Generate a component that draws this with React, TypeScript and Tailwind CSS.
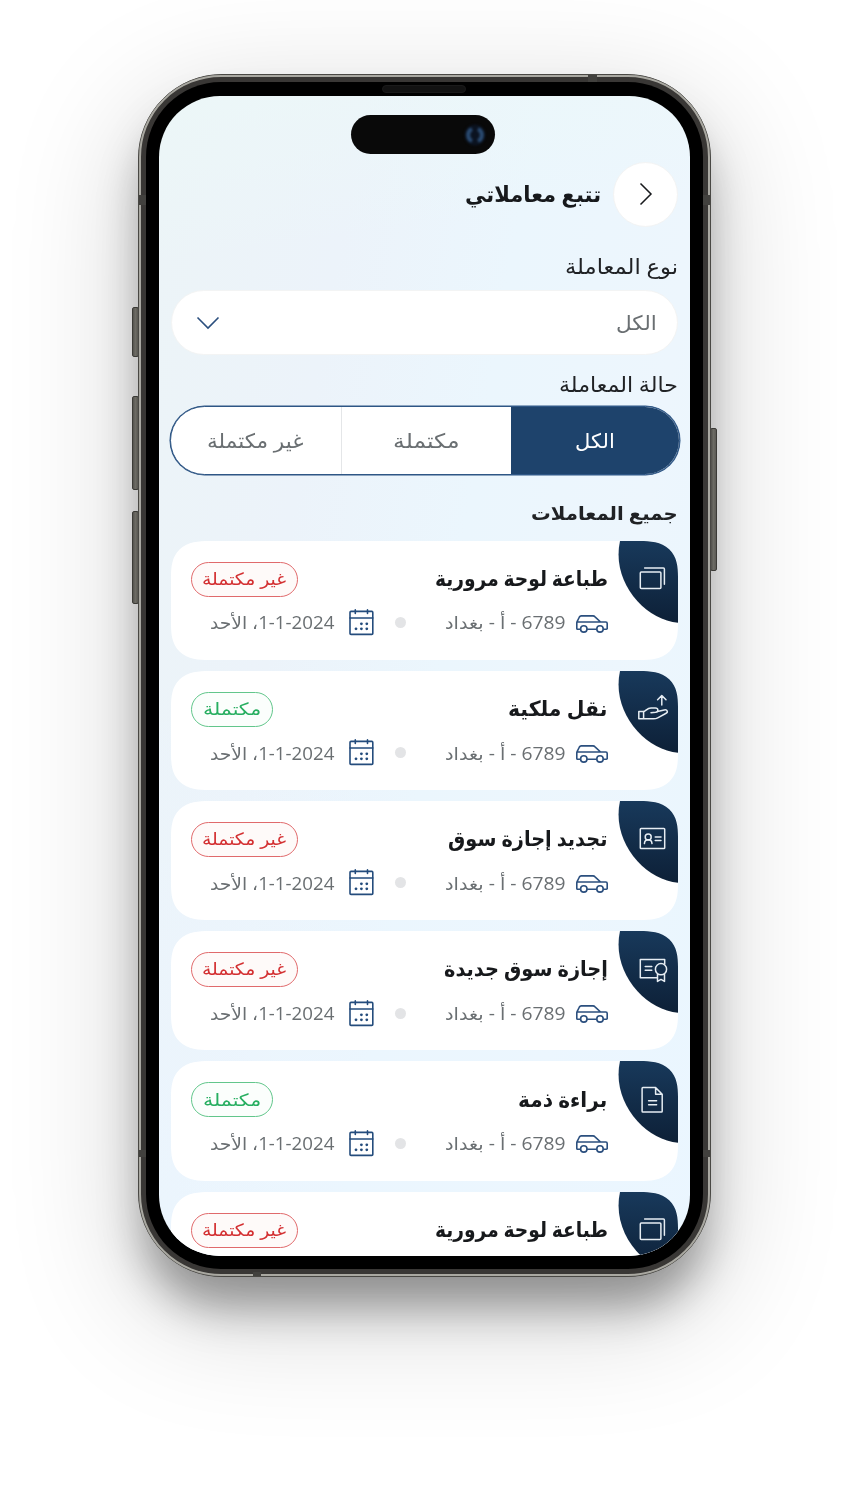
import { useLayoutEffect, useRef, useState } from "react";
import type { ReactNode } from "react";

type IconName = "plates" | "transfer" | "license" | "certificate" | "document";

interface Transaction {
  title: string;
  width: string;
  icon: IconName;
  done: boolean;
  collapsed?: boolean;
}

const transactions: Transaction[] = [
  { title: "طباعة لوحة مرورية", width: "w-[173px]", icon: "plates", done: false },
  { title: "نقل ملكية", width: "w-[99px]", icon: "transfer", done: true },
  { title: "تجديد إجازة سوق", width: "w-[159px]", icon: "license", done: false },
  { title: "إجازة سوق جديدة", width: "w-[164px]", icon: "certificate", done: false },
  { title: "براءة ذمة", width: "w-[89px]", icon: "document", done: true },
  { title: "طباعة لوحة مرورية", width: "w-[173px]", icon: "plates", done: false, collapsed: true },
];

/* One line of text, condensed or stretched to the width of its box. */
function Fit({ className, children }: { className: string; children: ReactNode }) {
  const box = useRef<HTMLSpanElement>(null);
  const line = useRef<HTMLSpanElement>(null);
  const [scale, setScale] = useState(1);
  useLayoutEffect(() => {
    if (box.current && line.current && line.current.offsetWidth > 0) {
      setScale(box.current.offsetWidth / line.current.offsetWidth);
    }
  }, []);
  return (
    <span ref={box} className={`block shrink-0 whitespace-nowrap ${className}`}>
      <span ref={line} className="inline-block origin-right" style={{ transform: `scaleX(${scale})` }}>
        {children}
      </span>
    </span>
  );
}

function CardIcon({ name }: { name: IconName }) {
  return (
    <g fill="none" stroke="#e6edf3" strokeWidth="1.5" strokeLinejoin="round" strokeLinecap="round">
      {name === "plates" && (
        <>
          <rect x="22.3" y="31" width="20.6" height="16.6" rx="1" />
          <path d="M26.6 26.9H45.4a1 1 0 0 1 1 1V43.2" />
        </>
      )}
      {name === "transfer" && (
        <>
          <path d="M43.8 34V24.6M39.6 28.7l4.2-4.2 4.2 4.2" />
          <path d="M20.8 40.4h4.8v7.4h-4.8zM25.6 40.8c2.6-1.2 3.8-3.8 7.4-3.8h4.4c3 0 3.6 3.8.2 4.3l-4.6.4M39.5 40.6l6.7-1.6c3.2-.8 4.3 2.3 1.5 3.5l-8 4.3c-1.4.8-2.6 1-4.2 1H25.6" />
        </>
      )}
      {name === "license" && (
        <>
          <rect x="22.3" y="27.4" width="24.4" height="20.2" rx=".8" />
          <circle cx="30.2" cy="36" r="3" />
          <path d="M26.4 42.6c.4-5 7.2-5 7.6 0M37.2 36h5.8M37.2 39.5h5.8" />
        </>
      )}
      {name === "certificate" && (
        <>
          <path d="M46.7 33v-4.4H22.3v18.2h16.8M27.2 35.4h6.6M27.2 39.3h6.6" />
          <circle cx="43" cy="38.2" r="5.6" />
          <path d="M39.5 43.2v7.2l3.5-2 3.5 2v-7.2" />
        </>
      )}
      {name === "document" && (
        <path d="M24.1 27.4a.8.8 0 0 1 .8-.8h12.7l6.6 6.6v17a.8.8 0 0 1-.8.8H24.9a.8.8 0 0 1-.8-.8zM37.6 26.6v6.6h6.6M30.6 39.8h8M30.6 43.7h8" />
      )}
    </g>
  );
}

function Leaf({ name, id }: { name: IconName; id: string }) {
  return (
    <svg width="60" height="83" viewBox="0 0 60 83" className="shrink-0">
      <defs>
        <linearGradient id={id} x1="0" y1="0" x2="0" y2="1">
          <stop offset="0" stopColor="#18395b" />
          <stop offset="1" stopColor="#0d2037" />
        </linearGradient>
      </defs>
      <path d="M2 0H60V81.8C27 79-7 41 2 0Z" fill={`url(#${id})`} />
      <CardIcon name={name} />
    </svg>
  );
}

function Car() {
  return (
    <svg width="32" height="18" viewBox="0 0 32 18" fill="none" stroke="#2b4f7e" strokeWidth="1.6" strokeLinejoin="round" className="relative top-px shrink-0">
      <path d="M4.6 14.2H1.6a.8.8 0 0 1-.8-.8V8Q.8 7.2 1.1 6.6L3.4 2Q4 .9 5.2.9H17q1.2 0 2 .9L24.6 7H29.8q1.4 0 1.4 1.4V13.4a.8.8 0 0 1-.8.8H27.2M20.8 14.2H11M1.1 7H25" />
      <circle cx="7.8" cy="13.9" r="3.2" />
      <circle cx="24" cy="13.9" r="3.2" />
    </svg>
  );
}

function Calendar() {
  return (
    <svg width="25" height="27" viewBox="0 0 25 27" className="shrink-0">
      <g fill="none" stroke="#244c7c" strokeWidth="1.6" strokeLinecap="round">
        <rect x="1" y="2.4" width="22.8" height="23" rx="1" />
        <path d="M1 9H23.8M6.3.9V4.4M18.5.9V4.4" />
      </g>
      <g fill="#244c7c">
        <circle cx="12.4" cy="14.8" r="1.4" />
        <circle cx="17.8" cy="14.8" r="1.4" />
        <circle cx="7" cy="19.8" r="1.4" />
        <circle cx="12.4" cy="19.8" r="1.4" />
        <circle cx="17.8" cy="19.8" r="1.4" />
      </g>
    </svg>
  );
}

function Badge({ done }: { done: boolean }) {
  return done ? (
    <span className="flex h-[35px] w-[82px] items-center justify-center rounded-full border border-[#62c68b] bg-[#fbfefc] pb-px text-[17px] text-[#27ae60]">
      <Fit className="w-[58px]">مكتملة</Fit>
    </span>
  ) : (
    <span className="flex h-[35px] w-[107px] items-center justify-center rounded-full border border-[#e06a6c] bg-[#fefaf9] pb-px text-[17px] text-[#d32f31]">
      <Fit className="w-[84px]">غير مكتملة</Fit>
    </span>
  );
}

function Card({ item, index }: { item: Transaction; index: number }) {
  return (
    <article className="flex h-[119.2px] shrink-0 overflow-hidden rounded-[38px/36px] bg-white [corner-shape:superellipse(1.4)]">
      <Leaf name={item.icon} id={`leaf-${index}`} />
      <div className="flex grow flex-col pt-[21px] pr-[10.5px] pl-[20px]">
        <div className="flex h-[35px] items-center justify-between">
          <Fit className={`pb-px text-[21px] font-bold text-[#17191c] ${item.width}`}>{item.title}</Fit>
          <Badge done={item.done} />
        </div>
        {!item.collapsed && (
          <div className="flex h-[52px] items-center text-[17.5px] text-[#6a6f72]">
            <Car />
            <Fit className="mr-[10px] w-[121px]">6789 - أ - بغداد</Fit>
            <span className="mr-[39px] size-[11px] shrink-0 rounded-full bg-[#e3e4e6]" />
            <span className="mr-[21px] flex">
              <Calendar />
            </span>
            <Fit className="mr-[14px] w-[124px]">1-1-2024، الأحد</Fit>
          </div>
        )}
      </div>
    </article>
  );
}

function Screen() {
  return (
    <div
      dir="rtl"
      className="relative flex h-full flex-col overflow-hidden rounded-[61px] bg-[linear-gradient(172deg,rgba(236,248,248,0.7)_0%,rgba(236,248,248,0)_14%,rgba(235,246,255,0)_45%,rgba(235,246,255,0.8)_100%),linear-gradient(100deg,#ecf4f7_0%,#ecf3fa_28%,#ebf6fd_52%,#edf6fd_76%,#e9f6fe_100%)] pr-[11.5px] pl-[12.5px] font-['Open_Sans','DejaVu_Sans',sans-serif]"
    >
      <header className="mt-[66px] flex h-[64px] shrink-0 items-center">
        <button className="flex size-[65px] shrink-0 items-center justify-center rounded-full border border-[#f3f4f4] bg-white">
          <svg width="14" height="24" viewBox="0 0 14 24" fill="none" stroke="#17191c" strokeWidth="1.5">
            <path d="M1.5 1.5 12 12 1.5 22.5" />
          </svg>
        </button>
        <h1 className="mr-[12px] pb-[2px] text-[22px] font-bold text-[#17191c]">
          <Fit className="w-[136px]">تتبع معاملاتي</Fit>
        </h1>
      </header>

      <label className="mt-[25px] flex h-[30px] shrink-0 items-center pt-px text-[21px] text-[#202225]">
        <Fit className="w-[113px]">نوع المعاملة</Fit>
      </label>
      <div className="mt-[9px] flex h-[65px] shrink-0 items-center justify-between rounded-full border border-[#f3f4f4] bg-white pr-[20.5px] pl-[24px] text-[20px] text-[#6a6f72]">
        <Fit className="w-[41px]">الكل</Fit>
        <svg width="24" height="14" viewBox="0 0 24 14" fill="none" stroke="#2b4f7e" strokeWidth="1.6">
          <path d="M1.5 1.5 12 12 22.5 1.5" />
        </svg>
      </div>

      <label className="mt-[14px] flex h-[30px] shrink-0 items-center pt-px text-[21px] text-[#202225]">
        <Fit className="w-[119px]">حالة المعاملة</Fit>
      </label>
      <div className="-mx-[1.5px] mt-[7px] flex h-[69px] shrink-0 overflow-hidden rounded-full border border-[#2e5685] bg-white text-[20px] text-[#6a6f72] shadow-[0_0_0_0.5px_#2e5685]">
        <div className="flex w-[168px] items-center justify-center bg-[#1e436c] text-white">
          <Fit className="w-[40px]">الكل</Fit>
        </div>
        <div className="flex w-[170px] items-center justify-center border-l border-[#e4e6e8]">
          <Fit className="w-[67px]">مكتملة</Fit>
        </div>
        <div className="flex grow items-center justify-center">
          <Fit className="w-[96px]">غير مكتملة</Fit>
        </div>
      </div>

      <h2 className="mt-[22px] flex h-[32px] shrink-0 items-center text-[19px] font-bold text-[#202225]">
        <Fit className="w-[147px]">جميع المعاملات</Fit>
      </h2>
      <main className="mt-[11.6px] flex shrink-0 flex-col gap-[11px]">
        {transactions.map((item, index) => (
          <Card key={index} item={item} index={index} />
        ))}
      </main>

      <div className="absolute top-[19px] left-[192.5px] h-[39px] w-[144px] rounded-full bg-[#090909]">
        <svg width="24" height="24" viewBox="0 0 24 24" className="absolute top-[7.5px] right-[8px] blur-[1px]">
          <circle cx="12" cy="12" r="10.5" fill="#0b1320" />
          <path d="M9 6a6.6 6.6 0 0 0 0 12" fill="none" stroke="#2a4a70" strokeWidth="4" />
          <path d="M15 6a6.6 6.6 0 0 1 0 12" fill="none" stroke="#2a4a70" strokeWidth="4" />
        </svg>
      </div>
    </div>
  );
}

function SideButton({ className }: { className: string }) {
  return (
    <span
      className={`absolute w-[7px] rounded-[2px] border border-[#4a4944] bg-[linear-gradient(90deg,#6a6862,#8a887f,#72706a)] ${className}`}
    />
  );
}

export default function App() {
  return (
    <div className="flex h-[1498px] w-[848px] justify-center overflow-hidden bg-white pt-[74px]">
      <div className="relative h-[1203px] w-[573px]">
        <SideButton className="top-[233px] -left-[6px] h-[50px]" />
        <SideButton className="top-[322px] -left-[6px] h-[94px]" />
        <SideButton className="top-[437px] -left-[6px] h-[93px]" />
        <SideButton className="top-[354px] -right-[6px] h-[143px]" />
        <div className="relative h-full rounded-[84px] border-[1.5px] border-[#494844] bg-[#393735] shadow-[0_36px_44px_-6px_rgba(0,0,0,0.35),0_34px_120px_10px_rgba(0,0,0,0.17)]">
          <div className="h-full rounded-[82px] border-2 border-[#a9a8a1] p-[5px]">
            <div className="h-full rounded-[75px] bg-black px-[13px] pt-[14px] pb-[13px]">
              <Screen />
            </div>
          </div>
        </div>
        <span className="absolute top-[121px] left-px h-[10px] w-[7px] bg-[#42413e]" />
        <span className="absolute top-[121px] right-px h-[10px] w-[7px] bg-[#42413e]" />
        <span className="absolute top-[1076px] left-px h-[7px] w-[7px] bg-[#42413e]" />
        <span className="absolute top-[1076px] right-px h-[7px] w-[7px] bg-[#42413e]" />
        <span className="absolute top-px left-[450px] h-[7px] w-[9px] bg-[#42413e]" />
        <span className="absolute bottom-px left-[115px] h-[4px] w-[8px] bg-[#42413e]" />
        <span className="absolute top-[11px] left-[244px] h-[8px] w-[84px] rounded-full border border-[#1a1a1a] bg-[#121212]" />
      </div>
    </div>
  );
}
